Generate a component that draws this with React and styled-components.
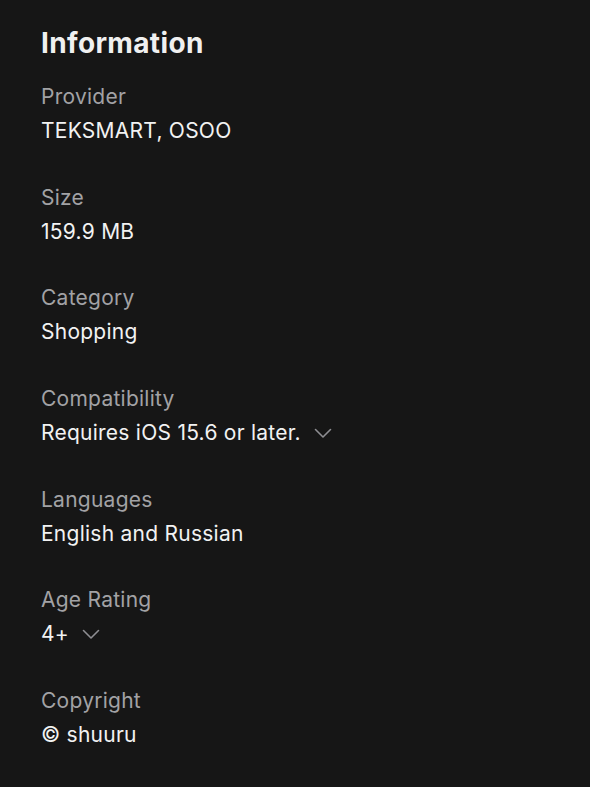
import React from 'react'
import styled, { createGlobalStyle } from 'styled-components'

const GlobalStyle = createGlobalStyle`
  html, body {
    margin: 0;
    padding: 0;
    background: #161616;
  }
  body {
    font-family: Inter, "Noto Sans", sans-serif;
    -webkit-font-smoothing: antialiased;
  }
`

const Page = styled.div`
  min-height: 787px;
  background: #161616;
  padding: 26px 41px 0;
  box-sizing: border-box;
`

const Title = styled.h2`
  margin: 0 0 23px;
  font-size: 28px;
  line-height: 34px;
  font-weight: 700;
  color: #f0f0f0;
  letter-spacing: 0.35px;
`

const List = styled.dl`
  margin: 0;
  display: flex;
  flex-direction: column;
  gap: 38.7px;
`

const Item = styled.div`
  display: flex;
  flex-direction: column;
  gap: 6px;
`

const Label = styled.dt`
  font-size: 21px;
  line-height: 28px;
  letter-spacing: 0.25px;
  color: #a2a2a5;
`

const Value = styled.dd`
  margin: 0;
  font-size: 21px;
  line-height: 28px;
  letter-spacing: 0.25px;
  color: #f2f2f2;
  display: flex;
  align-items: center;
  gap: 13px;
`

const Chevron = () => (
  <svg width="18" height="12" viewBox="0 0 18 12" fill="none">
    <path d="M1.5 2.5 L9 10 L16.5 2.5" stroke="#8e8e92" strokeWidth="1.6" strokeLinecap="round" strokeLinejoin="round" />
  </svg>
)

const rows = [
  { label: 'Provider', value: 'TEKSMART, OSOO' },
  { label: 'Size', value: '159.9 MB' },
  { label: 'Category', value: 'Shopping' },
  { label: 'Compatibility', value: 'Requires iOS 15.6 or later.', more: true },
  { label: 'Languages', value: 'English and Russian' },
  { label: 'Age Rating', value: '4+', more: true },
  { label: 'Copyright', value: '© shuuru' },
]

const App = () => {
  return (
    <Page>
      <GlobalStyle />
      <Title>Information</Title>
      <List>
        {rows.map((row) => (
          <Item key={row.label}>
            <Label>{row.label}</Label>
            <Value>
              {row.value}
              {row.more && <Chevron />}
            </Value>
          </Item>
        ))}
      </List>
    </Page>
  )
}

export default App
